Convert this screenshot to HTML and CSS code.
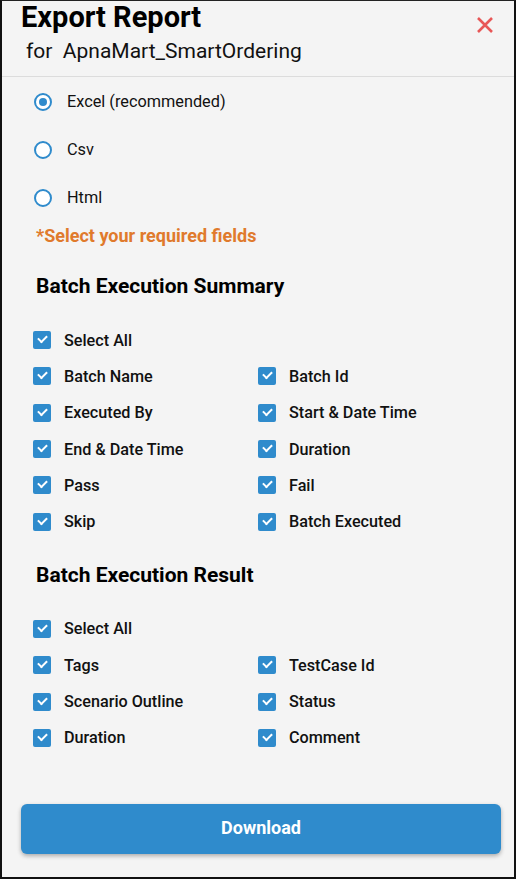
FILE: index.html
```html
<!DOCTYPE html>
<html>
<head>
<meta charset="utf-8">
<link rel="stylesheet" href="styles.css">
</head>
<body>
<div class="dialog">
  <header class="head">
    <div class="titles">
      <h1 class="title">Export Report</h1>
      <div class="subtitle">for&nbsp; ApnaMart_SmartOrdering</div>
    </div>
    <svg class="close" width="18" height="18" viewBox="0 0 18 18"><path d="M2 2 L16 16 M16 2 L2 16" stroke="#e85757" stroke-width="2.6" stroke-linecap="butt"/></svg>
  </header>
  <div class="body">
    <div class="radios">
      <div class="radio-row"><span class="radio checked"></span><span>Excel (recommended)</span></div>
      <div class="radio-row"><span class="radio"></span><span>Csv</span></div>
      <div class="radio-row"><span class="radio"></span><span>Html</span></div>
    </div>
    <div class="note">*Select your required fields</div>

    <h2 class="section">Batch Execution Summary</h2>
    <div class="grid">
      <div class="item full"><span class="cb"></span>Select All</div>
      <div class="item"><span class="cb"></span>Batch Name</div>
      <div class="item"><span class="cb"></span>Batch Id</div>
      <div class="item"><span class="cb"></span>Executed By</div>
      <div class="item"><span class="cb"></span>Start &amp; Date Time</div>
      <div class="item"><span class="cb"></span>End &amp; Date Time</div>
      <div class="item"><span class="cb"></span>Duration</div>
      <div class="item"><span class="cb"></span>Pass</div>
      <div class="item"><span class="cb"></span>Fail</div>
      <div class="item"><span class="cb"></span>Skip</div>
      <div class="item"><span class="cb"></span>Batch Executed</div>
    </div>

    <h2 class="section second">Batch Execution Result</h2>
    <div class="grid">
      <div class="item full"><span class="cb"></span>Select All</div>
      <div class="item"><span class="cb"></span>Tags</div>
      <div class="item"><span class="cb"></span>TestCase Id</div>
      <div class="item"><span class="cb"></span>Scenario Outline</div>
      <div class="item"><span class="cb"></span>Status</div>
      <div class="item"><span class="cb"></span>Duration</div>
      <div class="item"><span class="cb"></span>Comment</div>
    </div>
  </div>
  <div class="footer">
    <button class="download">Download</button>
  </div>
</div>
</body>
</html>
```
FILE: styles.css
```css
* { box-sizing: border-box; }
html, body { margin: 0; padding: 0; }
body {
  font-family: Roboto, "Liberation Sans", sans-serif;
  color: #111;
  background: #f4f4f4;
}
.dialog {
  width: 516px;
  height: 879px;
  background: #f4f4f4;
  border: 2px solid #111;
  border-top: 1px solid #222;
  display: flex;
  flex-direction: column;
}
.head {
  display: flex;
  justify-content: space-between;
  align-items: flex-start;
  padding: 0 20px 0 19px;
  height: 76px;
  border-bottom: 1px solid #dcdcdc;
}
.title {
  margin: 0;
  font-size: 29px;
  font-weight: 700;
  line-height: 32px;
  color: #000;
}
.subtitle {
  margin: 6px 0 0 5px;
  font-size: 21px;
  line-height: 24px;
  color: #111;
}
.close { margin-top: 15px; }
.body {
  flex: 1;
  padding: 0 0 0 29px;
}
.radios { padding-top: 13px; }
.radio-row {
  display: flex;
  align-items: center;
  height: 24px;
  margin-bottom: 24px;
  font-size: 16.3px;
  line-height: 18px;
}
.radio-row:last-child { margin-bottom: 0; }
.radio {
  width: 18px;
  height: 18px;
  border: 2px solid #2f8bcc;
  border-radius: 50%;
  margin-left: 3px;
  margin-right: 15px;
  position: relative;
  background: #fff;
}
.radio.checked::after {
  content: "";
  position: absolute;
  left: 3px; top: 3px;
  width: 8px; height: 8px;
  border-radius: 50%;
  background: #2f8bcc;
}
.note {
  margin: 16px 0 0 5px;
  color: #e07a2c;
  font-weight: 700;
  font-size: 18px;
  line-height: 20px;
}
.section {
  margin: 28px 0 0 5px;
  font-size: 21px;
  font-weight: 700;
  line-height: 24px;
  color: #000;
}
.section.second { margin-top: 23px; }
.grid {
  display: grid;
  grid-template-columns: 225px 1fr;
  grid-auto-rows: 36.3px;
  margin-top: 24px;
  padding-left: 2px;
}
.item {
  display: flex;
  align-items: center;
  font-size: 16.2px;
  font-weight: 500;
  color: #111;
}
.item.full { grid-column: 1 / 3; }
.cb {
  width: 18px;
  height: 18px;
  border-radius: 2px;
  background: #2f8bcc;
  margin-right: 13px;
  position: relative;
  flex: none;
}
.cb::after {
  content: "";
  position: absolute;
  left: 5px; top: 4px;
  width: 7px; height: 4px;
  border-left: 2px solid #fff;
  border-bottom: 2px solid #fff;
  transform: rotate(-45deg);
}
.footer {
  padding: 0 13px 23px 19px;
}
.download {
  width: 100%;
  height: 50px;
  border: none;
  border-radius: 6px;
  background: #2f8bcc;
  color: #fff;
  font-family: Roboto, "Liberation Sans", sans-serif;
  font-weight: 700;
  font-size: 18px;
  line-height: 20px;
  padding: 0 0 2px;
  box-shadow: 0 2px 4px rgba(0,0,0,0.3);
}
```
